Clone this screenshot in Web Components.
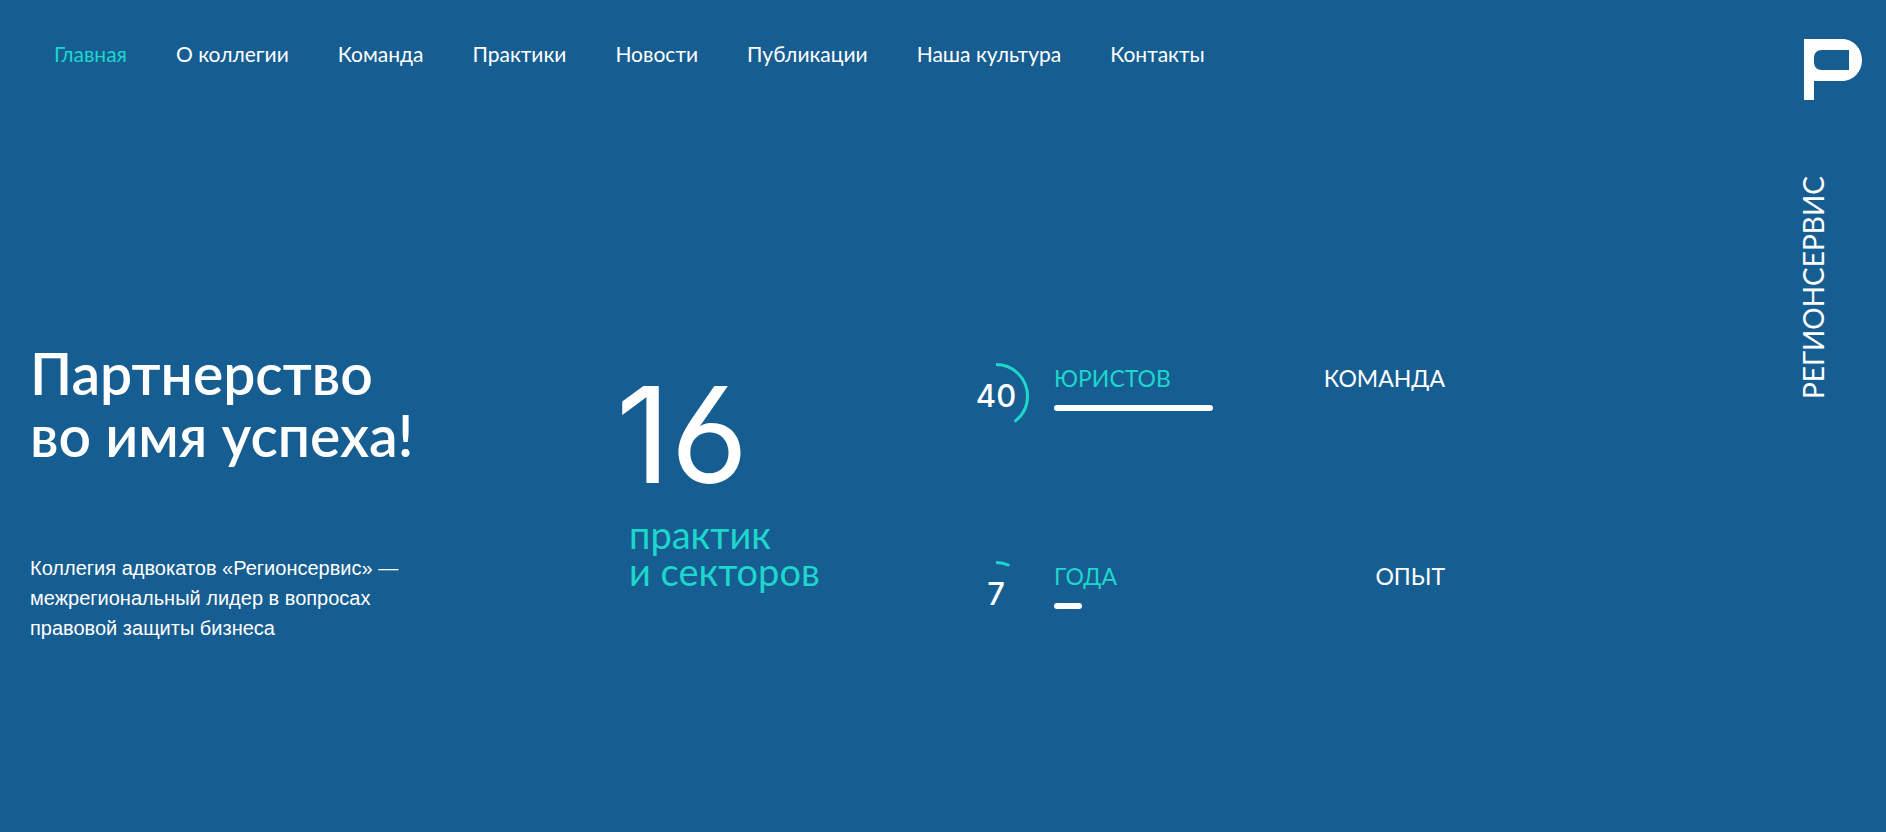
<!DOCTYPE html>
<html lang="ru">
<head>
<meta charset="utf-8">
<meta name="viewport" content="width=device-width, initial-scale=1">
<title>Регионсервис</title>
<style>
:root { --bg: #165d91; --accent: #1dd6cc; --ink: #fff; }
body { margin: 0; background: var(--bg); color: var(--ink); font-family: Lato, sans-serif; }
</style>
</head>
<body>
<rs-page>
  <rs-nav slot="nav">
    <rs-nav-item href="#main" active>Главная</rs-nav-item>
    <rs-nav-item href="#about">О коллегии</rs-nav-item>
    <rs-nav-item href="#team">Команда</rs-nav-item>
    <rs-nav-item href="#practices">Практики</rs-nav-item>
    <rs-nav-item href="#news">Новости</rs-nav-item>
    <rs-nav-item href="#publications">Публикации</rs-nav-item>
    <rs-nav-item href="#culture">Наша культура</rs-nav-item>
    <rs-nav-item href="#contacts">Контакты</rs-nav-item>
  </rs-nav>
  <rs-intro>
    <span slot="title">Партнерство<br>во имя успеха!</span>
    Коллегия адвокатов «Регионсервис» —<br>межрегиональный лидер в вопросах<br>правовой защиты бизнеса
  </rs-intro>
  <rs-figure value="16">практик<br>и секторов</rs-figure>
  <rs-stats>
    <rs-stat value="40" unit="ЮРИСТОВ">КОМАНДА</rs-stat>
    <rs-stat value="7" unit="ГОДА">ОПЫТ</rs-stat>
  </rs-stats>
  <rs-brand slot="brand">РЕГИОНСЕРВИС</rs-brand>
</rs-page>

<script>
class Base extends HTMLElement {
  connectedCallback() {
    if (this.shadowRoot) return;
    this.attachShadow({ mode: "open" }).innerHTML = this.render();
  }
}

customElements.define("rs-page", class extends Base {
  render() {
    return `<style>
      :host { display: flex; min-height: 100vh; }
      .content { flex: 1; min-width: 0; }
      header { padding: 42px 0 0 54px; }
      main { display: grid; grid-template-columns: 586fr 347fr 488fr 353fr; align-items: start; padding: 276px 0 40px 30px; }
      @media (max-width: 1200px) {
        main { grid-template-columns: 1fr; gap: 48px; padding: 80px 30px 40px; }
      }
    </style>
    <div class="content">
      <header><slot name="nav"></slot></header>
      <main><slot></slot></main>
    </div>
    <slot name="brand"></slot>`;
  }
});

customElements.define("rs-nav", class extends Base {
  render() {
    return `<style>
      :host { display: block; }
      nav { display: flex; flex-wrap: wrap; gap: 16px 49px; }
    </style><nav><slot></slot></nav>`;
  }
});

customElements.define("rs-nav-item", class extends Base {
  render() {
    return `<style>
      :host { display: block; }
      a { color: inherit; text-decoration: none; font-size: 21px; line-height: 24px; white-space: nowrap; }
      :host([active]) { color: var(--accent); }
    </style><a href="${this.getAttribute("href")}"><slot></slot></a>`;
  }
});

customElements.define("rs-intro", class extends Base {
  render() {
    return `<style>
      :host { display: block; }
      h1 { margin: 0 0 87px; font-size: 57px; font-weight: 600; line-height: 62px; }
      p { margin: 0; font: 20px/30px "Liberation Sans", Arial, sans-serif; }
    </style><h1><slot name="title"></slot></h1><p><slot></slot></p>`;
  }
});

customElements.define("rs-figure", class extends Base {
  render() {
    return `<style>
      :host { display: block; margin-top: 28px; }
      .value { font: 400 134px/128px Inter, sans-serif; font-feature-settings: "cv03"; }
      .label { margin-top: 18px; padding-left: 13px; font-size: 38px; line-height: 37px; color: var(--accent); }
    </style><div class="value">${this.getAttribute("value")}</div><div class="label"><slot></slot></div>`;
  }
});

customElements.define("rs-stats", class extends Base {
  render() {
    return `<style>
      :host { display: grid; gap: 132px; margin-top: 21px; }
    </style><slot></slot>`;
  }
});

customElements.define("rs-stat", class extends Base {
  render() {
    const value = this.getAttribute("value");
    return `<style>
      :host { display: flex; gap: 25px; }
      .ring { display: grid; flex: none; width: 66px; height: 66px; place-items: center; font: 500 31px/66px Inter, sans-serif; }
      .ring > * { grid-area: 1 / 1; }
      svg { display: block; }
      .body { flex: 1; }
      .row { display: flex; justify-content: space-between; padding: 1px 6px 0 0; font-size: 23px; line-height: 28px; }
      .unit { color: var(--accent); }
      .bar { width: ${value}%; height: 6px; margin-top: 13px; border-radius: 3px; background: var(--ink); }
    </style>
    <div class="ring">
      <svg width="66" height="66" viewBox="0 0 66 66" aria-hidden="true">
        <circle cx="33" cy="33" r="31.5" fill="none" stroke="var(--accent)" stroke-width="3" pathLength="100" stroke-dasharray="${value} 100" transform="rotate(-90 33 33)"/>
      </svg>
      <span>${value}</span>
    </div>
    <div class="body">
      <div class="row"><span class="unit">${this.getAttribute("unit")}</span><span><slot></slot></span></div>
      <div class="bar"></div>
    </div>`;
  }
});

customElements.define("rs-brand", class extends Base {
  render() {
    return `<style>
      :host { display: block; flex: none; padding: 39px 24px 0 0; }
      a { display: flex; flex-direction: column; align-items: flex-start; gap: 76px; color: inherit; text-decoration: none; }
      svg { display: block; }
      span { writing-mode: vertical-rl; transform: rotate(180deg); font-size: 28px; line-height: 18px; }
    </style>
    <a href="#main">
      <svg width="58" height="61" viewBox="0 0 58 61" aria-hidden="true">
        <path fill="currentColor" fill-rule="evenodd" d="M0 0H38C50 0 58 10 58 21S50 42 38 42H10V61H0ZM18 11C13 11 10 14 10 19V23C10 28 13 31 18 31H45V11Z"/>
      </svg>
      <span><slot></slot></span>
    </a>`;
  }
});
</script>
</body>
</html>
